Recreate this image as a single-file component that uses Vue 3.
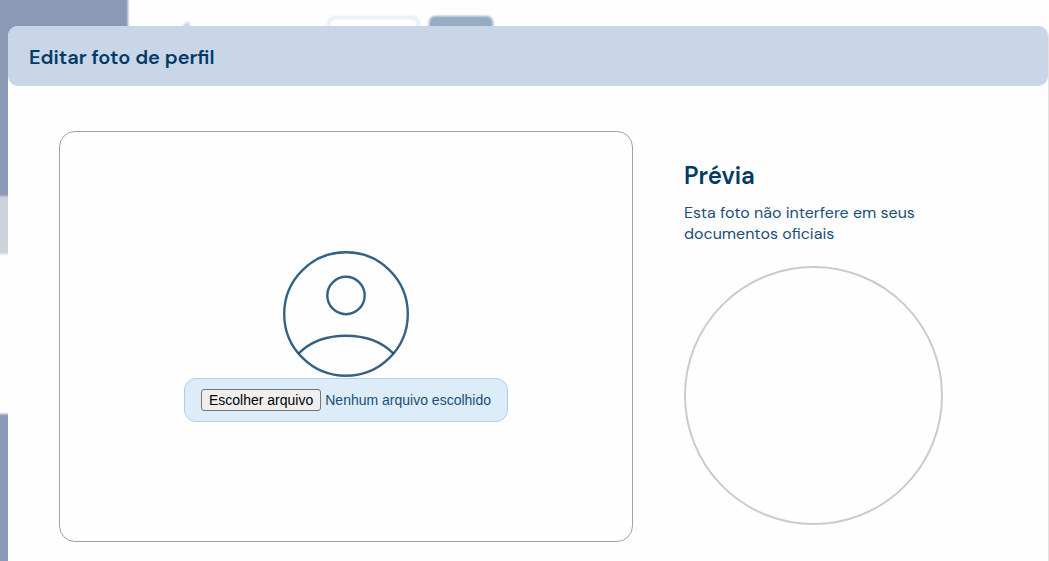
<script setup>
import { ref } from 'vue'

const fileName = ref('')

function onFileChange(event) {
  const file = event.target.files[0]
  fileName.value = file ? file.name : ''
}
</script>

<template>
  <div class="screen">
    <div class="backdrop" aria-hidden="true">
      <div class="sidebar">
        <div class="sidebar-top"></div>
        <div class="sidebar-active"></div>
        <div class="sidebar-menu"></div>
        <div class="sidebar-rest"></div>
      </div>
      <div class="toolbar">
        <svg class="back" width="24" height="24" viewBox="0 0 24 24">
          <path d="M13 4 5 12l8 8M5 12h16" fill="none" stroke="#a9b8c8" stroke-width="3" />
        </svg>
        <div class="ghost-outline"></div>
        <div class="ghost-filled"></div>
      </div>
    </div>

    <section class="dialog" role="dialog" aria-labelledby="dialog-title">
      <header class="dialog-header">
        <h1 id="dialog-title">Editar foto de perfil</h1>
      </header>
      <div class="dialog-body">
        <div class="editor">
          <svg class="avatar" width="126" height="126" viewBox="0 0 126 126" fill="none" stroke="#003b67" stroke-opacity="0.8" stroke-width="2.4" aria-hidden="true">
            <circle cx="63" cy="63" r="61.8" />
            <circle cx="63" cy="44.5" r="18.7" />
            <path d="M15.5 102.500C27 91 44 84.700 63 84.700S99 91 110.500 102.500" />
          </svg>
          <label class="picker">
            <input class="picker-input" type="file" accept="image/*" @change="onFileChange" />
            <span class="picker-button">Escolher arquivo</span>
            <span class="picker-name">{{ fileName || 'Nenhum arquivo escolhido' }}</span>
          </label>
        </div>
        <aside class="preview">
          <h2>Prévia</h2>
          <p>Esta foto não interfere em seus documentos oficiais</p>
          <div class="preview-circle"></div>
        </aside>
      </div>
    </section>
  </div>
</template>

<style>
body {
  margin: 0;
  background: #fefefe;
}
</style>

<style scoped>
.screen {
  position: relative;
  height: 100vh;
  overflow: hidden;
  color: #003b67;
  font-family: "DM Sans", Inter, sans-serif;
}

.backdrop {
  display: flex;
  height: 100%;
}

.sidebar {
  display: flex;
  flex-direction: column;
  width: 136px;
  margin: -8px 0 -8px -8px;
  filter: blur(1px);
}

.sidebar-top {
  height: 204px;
  background: #8a9ab6;
}

.sidebar-active {
  height: 58px;
  background: #ccd3dd;
}

.sidebar-menu {
  height: 160px;
  background: #fefefe;
}

.sidebar-rest {
  flex: 1;
  background: #8a9ab6;
}

.toolbar {
  display: flex;
  align-items: flex-start;
  padding: 16px 0 0 48px;
  filter: blur(1px);
}

.back {
  margin: 3px 127px 0 0;
  filter: blur(1px);
}

.ghost-outline {
  box-sizing: border-box;
  width: 93px;
  height: 36px;
  margin-right: 9px;
  border: 3px solid #e6edf3;
  border-radius: 8px;
}

.ghost-filled {
  width: 64px;
  height: 36px;
  border-radius: 6px;
  background: #96acc3;
}

.dialog {
  position: absolute;
  inset: 26px 0 auto 8px;
  min-height: 100vh;
  border-right: 1px solid #e2e2e2;
  border-radius: 10px 10px 0 0;
  background: #fefefe;
}

.dialog-header {
  padding: 18px 21px 16px;
  border-radius: 10px;
  background: #c8d6e8;
}

h1,
h2,
p {
  margin: 0;
}

h1 {
  font-size: 20px;
  font-weight: 600;
  line-height: 26px;
}

.dialog-body {
  display: grid;
  grid-template-columns: minmax(0, 1fr) 313px;
  align-items: start;
  gap: 51px;
  padding: 45px 51px;
}

.editor {
  box-sizing: border-box;
  display: flex;
  flex-direction: column;
  align-items: center;
  justify-content: center;
  gap: 1px;
  min-height: 411px;
  border: 1px solid #98a5b1;
  border-radius: 16px;
}

.avatar {
  display: block;
}

.picker {
  box-sizing: border-box;
  position: relative;
  display: flex;
  align-items: center;
  gap: 4px;
  height: 44px;
  padding: 0 16px;
  border: 1px solid #b4cfe3;
  border-radius: 12px;
  background: #dcecf9;
  font: 14px/20px "Liberation Sans", Arial, sans-serif;
  cursor: pointer;
}

.picker-input {
  position: absolute;
  inset: 0;
  width: 100%;
  opacity: 0;
  cursor: pointer;
}

.picker-button {
  padding: 0 7px;
  border: 1px solid #767676;
  border-radius: 3px;
  background: #efefef;
  color: #000;
}

.picker-name {
  color: #1a4f78;
}

.preview {
  padding-top: 29px;
}

h2 {
  font-size: 24px;
  font-weight: 600;
  line-height: 32px;
}

p {
  max-width: 260px;
  margin: 10px 0 22px;
  color: #1a4f78;
  font-size: 16px;
  line-height: 21px;
}

.preview-circle {
  box-sizing: border-box;
  width: 259px;
  aspect-ratio: 1;
  border: 2px solid #cbcbcb;
  border-radius: 50%;
}
</style>
